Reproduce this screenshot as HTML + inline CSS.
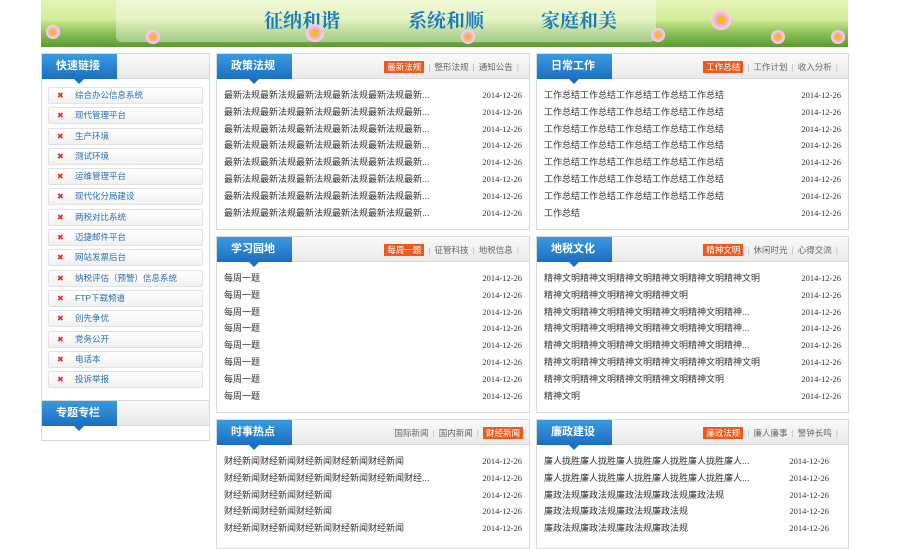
<!DOCTYPE html>
<html><head><meta charset="utf-8"><style>
*{margin:0;padding:0;box-sizing:border-box}
body{width:900px;height:531px;overflow:hidden;background:#fff;font-family:"Liberation Sans","Noto Sans CJK SC",sans-serif;font-size:9px;color:#333;position:relative}
.banner{position:absolute;left:41px;top:0;width:807px;height:47px;background:linear-gradient(180deg,#e6f3b8 0%,#d3ec9a 40%,#8cc257 70%,#5a9a30 100%)}
.banner .glass{position:absolute;left:75px;top:0;width:540px;height:42px;background:rgba(255,255,255,.4);border-radius:0 0 6px 6px}
.banner .t{position:absolute;top:6px;font-family:"Noto Serif CJK SC",serif;font-size:19px;color:#1a78c2;font-weight:bold}
.fl{position:absolute;width:14px;height:14px;border-radius:50%;background:radial-gradient(circle,#f5c000 0 25%,#f2a3c6 30%,#fbe0ee 80%)}
.box{position:absolute;border:1px solid #d9d9d9;background:#fff}
.hd{height:25px;background:linear-gradient(#fafafa,#e9e9e9);border-bottom:1px solid #d9d9d9;position:relative}
.tab{position:absolute;left:0;top:0;height:25px;width:75px;background:linear-gradient(#3a9ae0,#1a6fbf);color:#fff;font-size:11px;font-weight:bold;line-height:25px;padding-left:14px}
.tab:after{content:"";position:absolute;left:32px;bottom:-5px;border:5px solid transparent;border-bottom:0;border-top-color:#1a6fbf}
.more{position:absolute;right:6px;top:7px;font-size:8.5px;color:#666;white-space:nowrap}
.more b{font-weight:normal;background:#ee5a1c;color:#fff;padding:1px 3px}
.more i{font-style:normal;color:#bbb;margin:0 4px}
.list{padding:8px 7px 0 7px}
.row{height:16.8px;line-height:16.8px;display:flex;justify-content:space-between;color:#333;white-space:nowrap}
.row span:last-child{font-size:8.5px;font-family:"Liberation Serif","Noto Serif CJK SC",serif;margin-right:0}
.links{padding:8px 6px}
.lk{height:17px;margin-bottom:3.3px;border:1px solid #e2e2e2;border-radius:2px;background:linear-gradient(#fff,#f1f1f1);color:#2b6fae;line-height:15px;padding-left:26px;position:relative;font-size:8.5px}
.lk:before{content:"✖";position:absolute;left:8px;top:0;color:#e03020;font-size:8px}
</style></head><body>
<div class="banner"><div class="glass"></div>
<div class="t" style="left:223px">征纳和谐</div><div class="t" style="left:367px">系统和顺</div><div class="t" style="left:500px">家庭和美</div>
<div class="fl" style="left:265px;top:24px;width:18px;height:18px"></div>
<div class="fl" style="left:105px;top:30px"></div><div class="fl" style="left:420px;top:30px"></div>
<div class="fl" style="left:670px;top:10px;width:20px;height:20px"></div><div class="fl" style="left:610px;top:28px"></div>
<div class="fl" style="left:5px;top:25px"></div><div class="fl" style="left:730px;top:30px"></div><div class="fl" style="left:790px;top:30px"></div>
</div>

<div class="box" style="left:41px;top:53px;width:169px;height:360px">
<div class="hd"><div class="tab">快速链接</div></div>
<div class="links">
<div class="lk">综合办公信息系统</div><div class="lk">现代管理平台</div><div class="lk">生产环境</div><div class="lk">测试环境</div><div class="lk">运维管理平台</div><div class="lk">现代化分局建设</div><div class="lk">两税对比系统</div><div class="lk">迈捷邮件平台</div><div class="lk">网站发票后台</div><div class="lk">纳税评估（预警）信息系统</div><div class="lk">FTP下载频道</div><div class="lk">创先争优</div><div class="lk">党务公开</div><div class="lk">电话本</div><div class="lk">投诉举报</div>
</div></div>
<div class="box" style="left:41px;top:400px;width:169px;height:41px">
<div class="hd"><div class="tab">专题专栏</div></div></div>

<div class="box" style="left:216px;top:53px;width:314px;height:177px">
<div class="hd"><div class="tab">政策法规</div><div class="more"><b>最新法规</b><i>|</i>整形法规<i>|</i>通知公告<i>|</i></div></div>
<div class="list">
<div class="row"><span>最新法规最新法规最新法规最新法规最新法规最新...</span><span>2014-12-26</span></div>
<div class="row"><span>最新法规最新法规最新法规最新法规最新法规最新...</span><span>2014-12-26</span></div>
<div class="row"><span>最新法规最新法规最新法规最新法规最新法规最新...</span><span>2014-12-26</span></div>
<div class="row"><span>最新法规最新法规最新法规最新法规最新法规最新...</span><span>2014-12-26</span></div>
<div class="row"><span>最新法规最新法规最新法规最新法规最新法规最新...</span><span>2014-12-26</span></div>
<div class="row"><span>最新法规最新法规最新法规最新法规最新法规最新...</span><span>2014-12-26</span></div>
<div class="row"><span>最新法规最新法规最新法规最新法规最新法规最新...</span><span>2014-12-26</span></div>
<div class="row"><span>最新法规最新法规最新法规最新法规最新法规最新...</span><span>2014-12-26</span></div>
</div></div>

<div class="box" style="left:536px;top:53px;width:313px;height:177px">
<div class="hd"><div class="tab">日常工作</div><div class="more"><b>工作总结</b><i>|</i>工作计划<i>|</i>收入分析<i>|</i></div></div>
<div class="list">
<div class="row"><span>工作总结工作总结工作总结工作总结工作总结</span><span>2014-12-26</span></div>
<div class="row"><span>工作总结工作总结工作总结工作总结工作总结</span><span>2014-12-26</span></div>
<div class="row"><span>工作总结工作总结工作总结工作总结工作总结</span><span>2014-12-26</span></div>
<div class="row"><span>工作总结工作总结工作总结工作总结工作总结</span><span>2014-12-26</span></div>
<div class="row"><span>工作总结工作总结工作总结工作总结工作总结</span><span>2014-12-26</span></div>
<div class="row"><span>工作总结工作总结工作总结工作总结工作总结</span><span>2014-12-26</span></div>
<div class="row"><span>工作总结工作总结工作总结工作总结工作总结</span><span>2014-12-26</span></div>
<div class="row"><span>工作总结</span><span>2014-12-26</span></div>
</div></div>

<div class="box" style="left:216px;top:236px;width:314px;height:177px">
<div class="hd"><div class="tab">学习园地</div><div class="more"><b>每周一题</b><i>|</i>征管科技<i>|</i>地税信息<i>|</i></div></div>
<div class="list">
<div class="row"><span>每周一题</span><span>2014-12-26</span></div>
<div class="row"><span>每周一题</span><span>2014-12-26</span></div>
<div class="row"><span>每周一题</span><span>2014-12-26</span></div>
<div class="row"><span>每周一题</span><span>2014-12-26</span></div>
<div class="row"><span>每周一题</span><span>2014-12-26</span></div>
<div class="row"><span>每周一题</span><span>2014-12-26</span></div>
<div class="row"><span>每周一题</span><span>2014-12-26</span></div>
<div class="row"><span>每周一题</span><span>2014-12-26</span></div>
</div></div>

<div class="box" style="left:536px;top:236px;width:313px;height:177px">
<div class="hd"><div class="tab">地税文化</div><div class="more"><b>精神文明</b><i>|</i>休闲时光<i>|</i>心得交流<i>|</i></div></div>
<div class="list">
<div class="row"><span>精神文明精神文明精神文明精神文明精神文明精神文明</span><span>2014-12-26</span></div>
<div class="row"><span>精神文明精神文明精神文明精神文明</span><span>2014-12-26</span></div>
<div class="row"><span>精神文明精神文明精神文明精神文明精神文明精神...</span><span>2014-12-26</span></div>
<div class="row"><span>精神文明精神文明精神文明精神文明精神文明精神...</span><span>2014-12-26</span></div>
<div class="row"><span>精神文明精神文明精神文明精神文明精神文明精神...</span><span>2014-12-26</span></div>
<div class="row"><span>精神文明精神文明精神文明精神文明精神文明精神文明</span><span>2014-12-26</span></div>
<div class="row"><span>精神文明精神文明精神文明精神文明精神文明</span><span>2014-12-26</span></div>
<div class="row"><span>精神文明</span><span>2014-12-26</span></div>
</div></div>

<div class="box" style="left:216px;top:419px;width:314px;height:130px">
<div class="hd"><div class="tab">时事热点</div><div class="more">国际新闻<i>|</i>国内新闻<i>|</i><b>财经新闻</b></div></div>
<div class="list">
<div class="row"><span>财经新闻财经新闻财经新闻财经新闻财经新闻</span><span>2014-12-26</span></div>
<div class="row"><span>财经新闻财经新闻财经新闻财经新闻财经新闻财经...</span><span>2014-12-26</span></div>
<div class="row"><span>财经新闻财经新闻财经新闻</span><span>2014-12-26</span></div>
<div class="row"><span>财经新闻财经新闻财经新闻</span><span>2014-12-26</span></div>
<div class="row"><span>财经新闻财经新闻财经新闻财经新闻财经新闻</span><span>2014-12-26</span></div>
</div></div>

<div class="box" style="left:536px;top:419px;width:313px;height:130px">
<div class="hd"><div class="tab">廉政建设</div><div class="more"><b>廉政法规</b><i>|</i>廉人廉事<i>|</i>警钟长鸣<i>|</i></div></div>
<div class="list">
<div class="row"><span>廉人拢胜廉人拢胜廉人拢胜廉人拢胜廉人拢胜廉人...</span><span style="margin-right:12px">2014-12-26</span></div>
<div class="row"><span>廉人拢胜廉人拢胜廉人拢胜廉人拢胜廉人拢胜廉人...</span><span style="margin-right:12px">2014-12-26</span></div>
<div class="row"><span>廉政法规廉政法规廉政法规廉政法规廉政法规</span><span style="margin-right:12px">2014-12-26</span></div>
<div class="row"><span>廉政法规廉政法规廉政法规廉政法规</span><span style="margin-right:12px">2014-12-26</span></div>
<div class="row"><span>廉政法规廉政法规廉政法规廉政法规</span><span style="margin-right:12px">2014-12-26</span></div>
</div></div>
</body></html>
